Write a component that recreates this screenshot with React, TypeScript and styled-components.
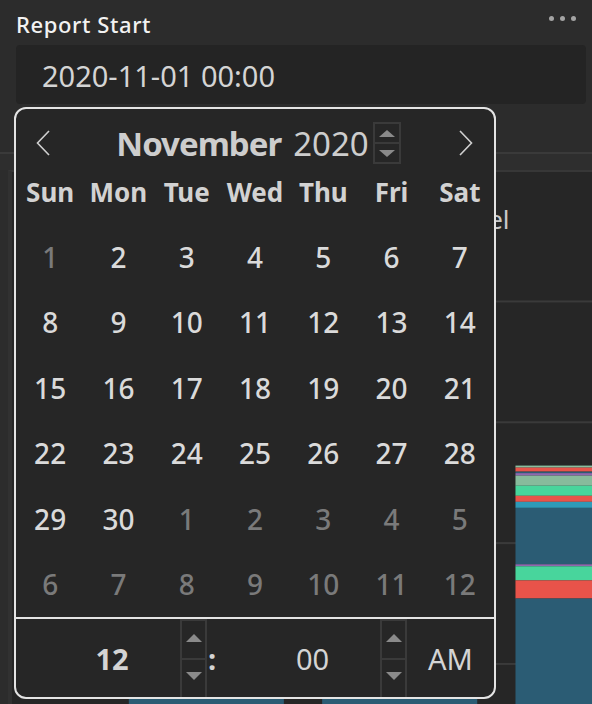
import React from "react";
import styled, { createGlobalStyle } from "styled-components";

const GlobalStyle = createGlobalStyle`
  html, body { margin: 0; padding: 0; background: #2b2b2b; }
  body {
    font-family: "Noto Sans", "Open Sans", "DejaVu Sans", sans-serif;
    -webkit-font-smoothing: antialiased;
  }
  * { box-sizing: border-box; }
`;

const Page = styled.div`
  position: relative;
  width: 592px;
  height: 704px;
  overflow: hidden;
  background: #2c2c2c;
  display: flex;
  flex-direction: column;
`;

const FilterSection = styled.section`
  height: 155px;
  padding: 0 6px 0 16px;
  display: flex;
  flex-direction: column;
`;

const LabelRow = styled.div`
  height: 45px;
  display: flex;
  justify-content: space-between;
  align-items: flex-start;
`;

const Label = styled.div`
  padding-top: 9px;
  font-size: 22px;
  line-height: 30px;
  font-weight: 500;
  letter-spacing: 0.6px;
  color: #f2f2f2;
`;

const MoreButton = styled.div`
  margin: 16px 10px 0 0;
  display: flex;
  gap: 6px;
`;

const Dot = styled.span`
  width: 5px;
  height: 5px;
  border-radius: 50%;
  background: #a4a4a4;
`;

const DateInput = styled.div`
  height: 59px;
  padding: 1px 0 0 26px;
  background: #242424;
  border-radius: 4px;
  display: flex;
  align-items: center;
  font-size: 29px;
  color: #d4d4d4;
`;

const Divider = styled.div`
  height: 2px;
  background: #3a3a3a;
`;

const Band = styled.div`
  height: 16px;
  background: #2e2e2e;
`;

const LowerPanel = styled.section`
  flex: 1;
  margin-left: 8px;
  border-left: 4px solid #313131;
  border-top: 2px solid #373737;
  background: #262626;
  display: flex;
  flex-direction: column;
`;

const PanelTitle = styled.div`
  padding: 29px 0 0 91px;
  height: 65px;
  font-size: 26px;
  line-height: 36px;
  color: #c8c8c8;
  white-space: nowrap;
`;

const Chart = styled.svg`
  display: block;
  flex: 1;
`;

/* ---------- popup ---------- */

const Popup = styled.div`
  position: absolute;
  left: 14px;
  top: 107px;
  width: 482px;
  height: 592px;
  border: 2px solid #e4e4e4;
  border-radius: 12px;
  background: #262626;
  display: flex;
  flex-direction: column;
  overflow: hidden;
`;

const Header = styled.div`
  height: 50px;
  padding: 18px 21px 0 20px;
  display: flex;
  align-items: center;
`;

const NavArrow = styled.svg`
  display: block;
  width: 14px;
  height: 26px;
`;

const Title = styled.div`
  flex: 1;
  padding-left: 8px;
  display: flex;
  align-items: center;
  justify-content: center;
  color: #cdcdcd;
  font-size: 33px;
  line-height: 33px;
`;

const Month = styled.span`
  font-weight: 700;
  letter-spacing: -1px;
`;

const Year = styled.span`
  margin-left: 12px;
  font-weight: 400;
`;

const YearSpinner = styled.div`
  margin-left: 4px;
  width: 28px;
  height: 42px;
  border: 2px solid #3a3a3a;
  display: flex;
  flex-direction: column;
`;

const SpinHalf = styled.div<{ $divider?: boolean; $nudge?: number }>`
  flex: 1;
  display: flex;
  align-items: center;
  justify-content: center;
  padding-bottom: ${(p) => p.$nudge ?? 0}px;
  border-bottom: ${(p) => (p.$divider ? "2px solid #3a3a3a" : "none")};
`;

const Triangle = styled.span<{ $up: boolean; $w: number; $h: number }>`
  width: 0;
  height: 0;
  border-left: ${(p) => p.$w / 2}px solid transparent;
  border-right: ${(p) => p.$w / 2}px solid transparent;
  ${(p) =>
    p.$up
      ? `border-bottom: ${p.$h}px solid #8a8a8a;`
      : `border-top: ${p.$h}px solid #8a8a8a;`}
`;

const WeekRow = styled.div`
  height: 65px;
  display: grid;
  grid-template-columns: repeat(7, 1fr);
  align-items: center;
  justify-items: center;
  font-size: 26px;
  line-height: 30px;
  font-weight: 700;
  color: #d2d2d2;
`;

const DaysGrid = styled.div`
  display: grid;
  grid-template-columns: repeat(7, 1fr);
  grid-auto-rows: 65.5px;
  align-items: center;
  justify-items: center;
  font-size: 28px;
  line-height: 32px;
  font-weight: 500;
`;

const Day = styled.span<{ $muted: boolean }>`
  color: ${(p) => (p.$muted ? "#7a7a7a" : "#dadada")};
`;

const TimeRow = styled.div`
  height: 80px;
  border-top: 2px solid #e4e4e4;
  display: flex;
`;

const TimeField = styled.div<{ $width?: number; $bold?: boolean; $pad?: number }>`
  ${(p) => (p.$width ? `width: ${p.$width}px;` : "flex: 1;")}
  padding-left: ${(p) => p.$pad ?? 0}px;
  display: flex;
  align-items: center;
  justify-content: center;
  font-size: 29px;
  font-weight: ${(p) => (p.$bold ? 700 : 400)};
  color: #d4d4d4;
`;

const Colon = styled.div`
  width: 10px;
  display: flex;
  align-items: center;
  justify-content: center;
  font-size: 29px;
  font-weight: 700;
  color: #d4d4d4;
`;

const TimeSpinner = styled.div`
  width: 27px;
  border: 2px solid #3a3a3a;
  border-bottom: none;
  display: flex;
  flex-direction: column;
`;

const weekdays = ["Sun", "Mon", "Tue", "Wed", "Thu", "Fri", "Sat"];

const days: { label: number; muted: boolean }[] = [];
for (let d = 1; d <= 30; d++) days.push({ label: d, muted: d === 1 });
for (let d = 1; d <= 12; d++) days.push({ label: d, muted: true });

const barC: [number, number, string][] = [
  [227, 229, "#8abf9f"],
  [229, 233, "#e8534a"],
  [233, 234.5, "#2b5c74"],
  [234.5, 237, "#8d6ab0"],
  [237, 247, "#87bb9c"],
  [247, 257, "#48d59c"],
  [257, 263, "#e8534a"],
  [263, 269, "#2e9ab8"],
  [269, 325, "#2b5c74"],
  [325, 327, "#8d6ab0"],
  [327, 341, "#48d59c"],
  [341, 359, "#e8534a"],
  [359, 470, "#2b5c74"],
];

const Spinner = ({ year }: { year?: boolean }) =>
  year ? (
    <YearSpinner>
      <SpinHalf $divider>
        <Triangle $up $w={17} $h={7} />
      </SpinHalf>
      <SpinHalf>
        <Triangle $up={false} $w={17} $h={7} />
      </SpinHalf>
    </YearSpinner>
  ) : (
    <TimeSpinner>
      <SpinHalf $divider $nudge={3}>
        <Triangle $up $w={16} $h={8} />
      </SpinHalf>
      <SpinHalf $nudge={4}>
        <Triangle $up={false} $w={16} $h={8} />
      </SpinHalf>
    </TimeSpinner>
  );

export default function App() {
  return (
    <>
      <GlobalStyle />
      <Page>
        <FilterSection>
          <LabelRow>
            <Label>Report Start</Label>
            <MoreButton>
              <Dot />
              <Dot />
              <Dot />
            </MoreButton>
          </LabelRow>
          <DateInput>2020-11-01 00:00</DateInput>
        </FilterSection>
        <Divider />
        <Band />
        <LowerPanel>
          <PanelTitle>Report Sessions by Sales Channel</PanelTitle>
          <Chart viewBox="0 0 576 464" preserveAspectRatio="xMinYMin slice">
            {[63, 183, 303, 423].map((y) => (
              <rect key={y} x={18} y={y} width={560} height={2} fill="#3a3a3a" />
            ))}
            <rect x={116} y={300} width={154} height={170} fill="#2b5c74" />
            <rect x={308} y={300} width={154} height={170} fill="#2b5c74" />
            {barC.map(([a, b, c], i) => (
              <rect key={i} x={500} y={a} width={154} height={b - a} fill={c} />
            ))}
          </Chart>
        </LowerPanel>

        <Popup>
          <Header>
            <NavArrow viewBox="0 0 14 26">
              <polyline points="13,1 1.5,13 13,25" fill="none" stroke="#cfcfcf" strokeWidth="1.6" />
            </NavArrow>
            <Title>
              <Month>November</Month>
              <Year>2020</Year>
              <Spinner year />
            </Title>
            <NavArrow viewBox="0 0 14 26">
              <polyline points="1,1 12.5,13 1,25" fill="none" stroke="#cfcfcf" strokeWidth="1.6" />
            </NavArrow>
          </Header>
          <WeekRow>
            {weekdays.map((w) => (
              <span key={w}>{w}</span>
            ))}
          </WeekRow>
          <DaysGrid>
            {days.map((d, i) => (
              <Day key={i} $muted={d.muted}>
                {d.label}
              </Day>
            ))}
          </DaysGrid>
          <TimeRow>
            <TimeField $width={164} $pad={28} $bold>
              12
            </TimeField>
            <Spinner />
            <Colon>:</Colon>
            <TimeField $pad={28}>00</TimeField>
            <Spinner />
            <TimeField $width={87}>AM</TimeField>
          </TimeRow>
        </Popup>
      </Page>
    </>
  );
}
